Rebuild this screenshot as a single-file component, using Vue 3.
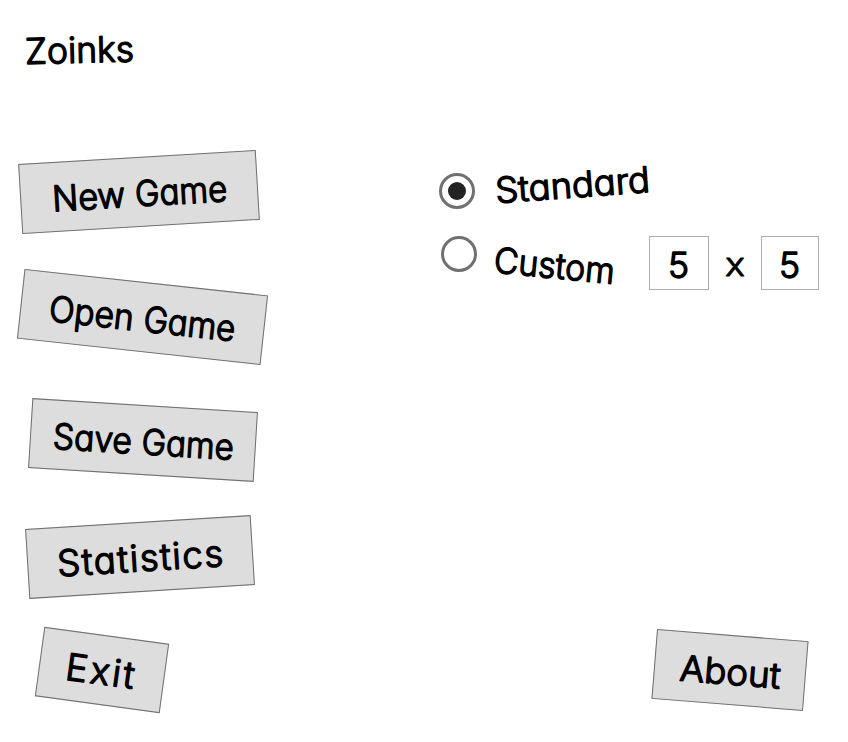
<script setup>
import { ref } from 'vue'

const actions = [
  { id: 'new', words: [['New', 32, 73], ['Game', 115, 92]], w: 238 },
  { id: 'open', words: [['Open', 29, 85], ['Game', 124, 92]], w: 245 },
  { id: 'save', words: [['Save', 23, 79], ['Game', 112, 92]], w: 226 },
  { id: 'statistics', words: [['Statistics', 30, 166]], w: 226, adjust: 'spacing' },
]
const exit = { id: 'exit', words: [['Exit', 27, 69]], w: 126, adjust: 'spacing' }
const about = { id: 'about', words: [['About', 26, 101]], w: 152 }
const bottom = [exit, about]
const mode = ref('standard')
</script>

<template>
  <main class="window">
    <header class="title">
      <svg class="lettering" width="130" height="50">
        <text x="0" y="38.5" textLength="109" lengthAdjust="spacingAndGlyphs">Zoinks</text>
      </svg>
    </header>
    <div class="body">
      <nav class="actions">
        <button v-for="b in actions" :key="b.id" class="btn" :class="b.id">
          <svg class="lettering" :width="b.w - 2" height="68">
            <text v-for="([word, x, len], i) in b.words" :key="i" :x="x - 1" y="48.3" :textLength="len" :lengthAdjust="b.adjust || 'spacingAndGlyphs'">{{ word }}</text>
          </svg>
        </button>
      </nav>
      <section class="options">
        <div class="option standard" @click="mode = 'standard'">
          <span class="radio"><i v-if="mode === 'standard'" class="dot"></i></span>
          <svg class="lettering label" width="160" height="50">
            <text x="1" y="37.5" textLength="155" lengthAdjust="spacingAndGlyphs">Standard</text>
          </svg>
        </div>
        <div class="option custom" @click="mode = 'custom'">
          <span class="radio"><i v-if="mode === 'custom'" class="dot"></i></span>
          <svg class="lettering label" width="130" height="50">
            <text x="0" y="38.7" textLength="121" lengthAdjust="spacingAndGlyphs">Custom</text>
          </svg>
          <div class="size">
            <span class="field rows"><svg class="lettering" width="58" height="52"><text x="18" y="41">5</text></svg></span>
            <svg class="lettering times" width="52" height="52"><text x="16" y="40" textLength="20" lengthAdjust="spacingAndGlyphs">x</text></svg>
            <span class="field cols"><svg class="lettering" width="56" height="52"><text x="17" y="41">5</text></svg></span>
          </div>
        </div>
      </section>
    </div>
    <footer class="bottom">
      <button v-for="b in bottom" :key="b.id" class="btn" :class="b.id">
        <svg class="lettering" :width="b.w - 2" height="68">
          <text v-for="([word, x, len], i) in b.words" :key="i" :x="x - 1" y="48.5" :textLength="len" :lengthAdjust="b.adjust || 'spacingAndGlyphs'">{{ word }}</text>
        </svg>
      </button>
    </footer>
  </main>
</template>

<style>
body { background: #fff; }
</style>

<style scoped>
.window { box-sizing: border-box; width: 848px; height: 742px; overflow: hidden; display: flex; flex-direction: column; padding: 24px 0 0; }
.lettering { display: block; flex: none; overflow: visible; font-family: "Comic Sans MS", Inter, "Open Sans", sans-serif; font-size: 35.5px; font-weight: 300; font-feature-settings: "cv11" 1; }
.lettering text { fill: #000; stroke: #000; stroke-width: 1.4px; stroke-linejoin: round; }
.lettering.times { font-size: 32px; }
.lettering.times text { stroke-width: 0.9px; }
.exit .lettering { font-size: 37px; }
.statistics .lettering { font-size: 36.5px; }
.title { height: 133px; padding-left: 25px; box-sizing: border-box; }
.title .lettering { transform: rotate(-1.3deg); }
.body { display: flex; height: 478px; }
.actions { width: 440px; flex: none; }
.btn { display: block; box-sizing: border-box; height: 70px; padding: 0; border: 1px solid #707070; background: #ddd; color: #000; }
.new { width: 238px; margin-left: 20px; transform: rotate(-3.4deg); }
.open { width: 245px; margin: 55px 0 0 20px; transform: rotate(6.2deg); }
.save { width: 226px; margin: 53px 0 0 30px; transform: rotate(3.55deg); }
.statistics { width: 226px; margin: 47px 0 0 27px; transform: rotate(-3.55deg); }
.bottom { display: flex; }
.exit { width: 126px; margin-left: 39px; transform: rotate(7.8deg); }
.about { width: 152px; margin-left: 489px; transform: rotate(4.6deg); }
.options { flex: 1; }
.option { display: flex; align-items: flex-start; }
.radio { box-sizing: border-box; width: 36px; height: 36px; flex: none; border: 3px solid #707070; border-radius: 50%; display: flex; align-items: center; justify-content: center; }
.dot { width: 18px; height: 18px; border-radius: 50%; background: #222; }
.standard { height: 79px; }
.standard .radio { margin: 15.5px 0 0 -0.7px; }
.standard .label { margin: 3px 0 0 18.7px; transform: rotate(-4.2deg); }
.custom .radio { margin-left: 0.5px; }
.custom .label { margin: 4px 0 0 17.5px; transform: rotate(5.5deg); }
.size { display: flex; margin-left: 25px; }
.field { box-sizing: border-box; height: 54px; border: 1px solid #abadb3; background: #fff; }
.rows { width: 60px; }
.cols { width: 58px; }
</style>
